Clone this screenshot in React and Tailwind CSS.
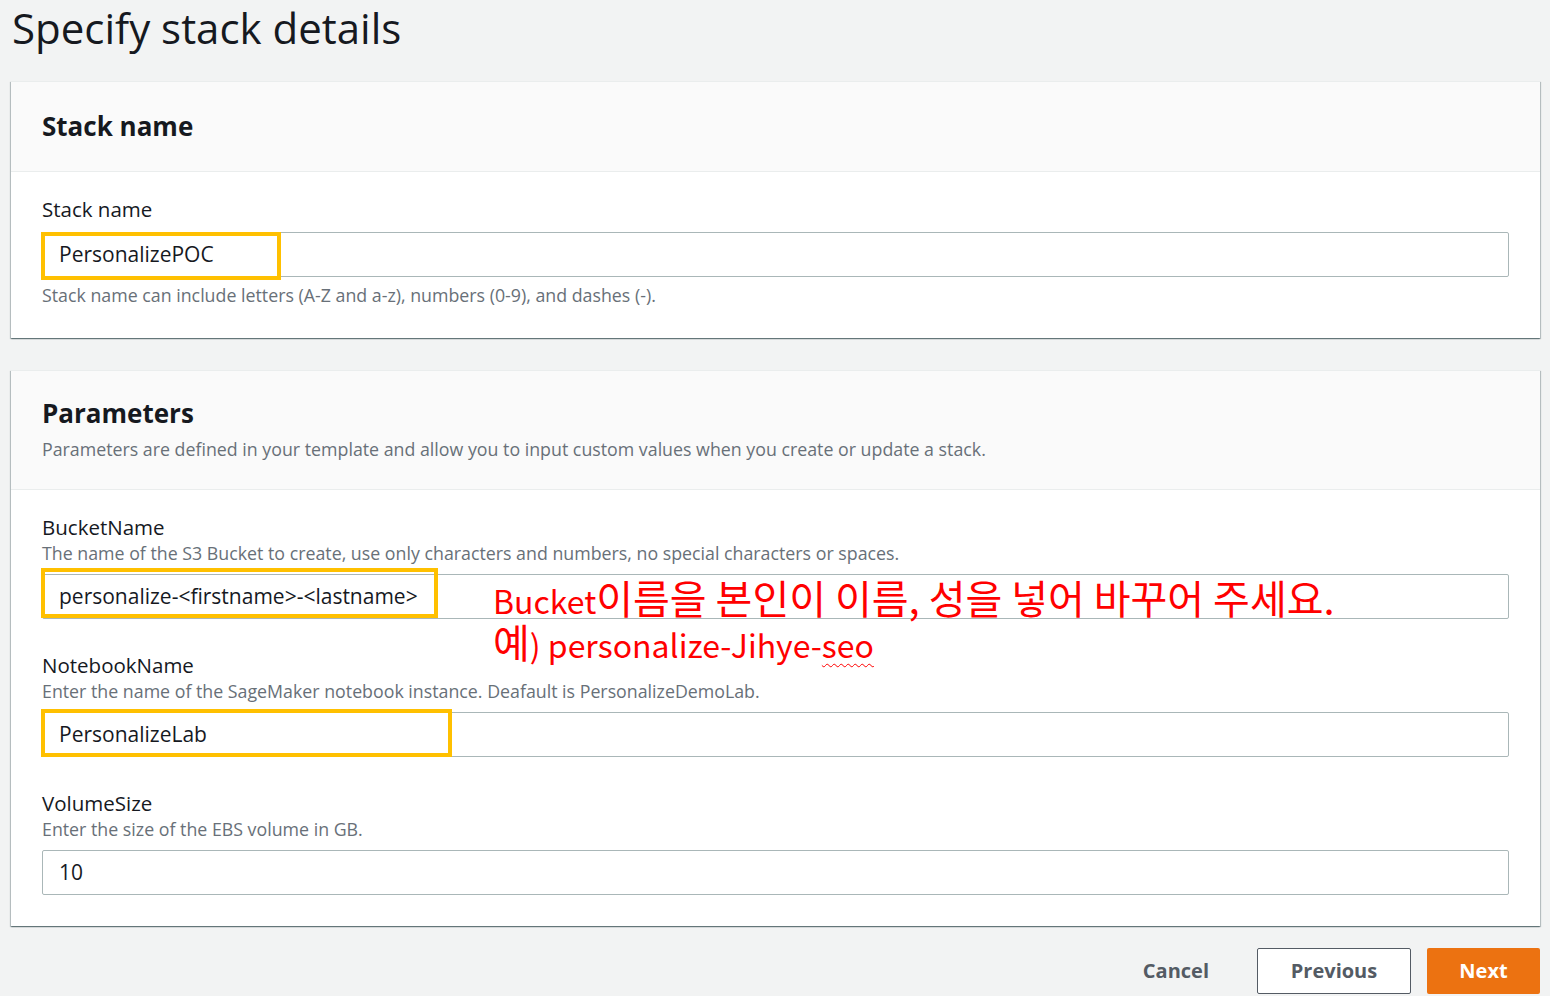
const font = { fontFamily: '"Open Sans", "Noto Sans", sans-serif' }
const kr = { fontFamily: '"Noto Sans CJK KR", "Noto Sans", sans-serif' }

function Field({ label, desc, value, hl }) {
  return (
    <div className="flex flex-col">
      <p className="text-[20.5px] leading-[28px] text-[#16191f]">{label}</p>
      {desc && <p className="text-[17.8px] leading-[24px] text-[#687078]">{desc}</p>}
      <div className="relative mt-[9px] h-[45px] border border-[#aab7b8] rounded-[2px] bg-white flex items-center pl-[16px] text-[21px] text-[#16191f]">
        {value}
        {hl && <div className={`absolute -left-[2px] border-[4px] border-[#ffc000] ${hl}`} />}
      </div>
    </div>
  )
}

function Card({ title, desc, children }) {
  return (
    <section className="bg-white border-t border-[#eaeded] shadow-[0_1px_1px_0_rgba(0,28,36,0.35),1px_1px_1px_0_rgba(0,28,36,0.2),-1px_1px_1px_0_rgba(0,28,36,0.2)]">
      <header className={`bg-[#fafafa] border-b border-[#eaeded] px-[31px] ${desc ? 'pt-[26px] pb-[28px]' : 'pt-[28px] pb-[29px]'}`}>
        <h2 className="text-[26px] leading-[32px] font-bold text-[#16191f]">{title}</h2>
        {desc && <p className="mt-[8px] text-[17.8px] leading-[24px] text-[#687078]">{desc}</p>}
      </header>
      {children}
    </section>
  )
}

export default function App() {
  return (
    <div style={font} className="w-[1550px] h-[996px] bg-[#f2f3f3] overflow-hidden">
      <h1 className="pl-[12px] text-[42px] leading-[56px] text-[#16191f]">Specify stack details</h1>
      <div className="pl-[11px] pr-[10px] mt-[25px] flex flex-col">
        <Card title="Stack name">
          <div className="px-[31px] pt-[23px] pb-[31px]">
            <Field label="Stack name" value="PersonalizePOC" hl="w-[240px] -top-[1px] h-[48px]" />
            <p className="mt-[6px] text-[17.8px] leading-[24px] text-[#687078]">Stack name can include letters (A-Z and a-z), numbers (0-9), and dashes (-).</p>
          </div>
        </Card>
        <div className="h-[32px]" />
        <Card title="Parameters" desc="Parameters are defined in your template and allow you to input custom values when you create or update a stack.">
          <div className="relative px-[31px] pt-[23px] pb-[31px] flex flex-col gap-[32px]">
            <Field label="BucketName" desc="The name of the S3 Bucket to create, use only characters and numbers, no special characters or spaces." value="personalize-<firstname>-<lastname>" hl="w-[397px] -top-[7px] h-[50px]" />
            <Field label="NotebookName" desc="Enter the name of the SageMaker notebook instance. Deafault is PersonalizeDemoLab." value="PersonalizeLab" hl="w-[411px] -top-[4px] h-[48px]" />
            <Field label="VolumeSize" desc="Enter the size of the EBS volume in GB." value="10" />
            <div style={kr} className="absolute left-[482px] top-[87px] text-[32px] leading-[45px] text-[#ff0000]">
              <p>Bucket<span className="text-[40px] leading-[40px]">이름을 본인이 이름, 성을 넣어 바꾸어 주세요.</span></p>
              <p className="-mt-[2px]"><span className="text-[40px] leading-[40px]">예</span>) personalize-Jihye-<span className="underline decoration-wavy decoration-[1px] underline-offset-[5px]">seo</span></p>
            </div>
          </div>
        </Card>
        <div className="flex justify-end items-center mt-[22px] gap-[16px]">
          <button className="px-[32px] h-[45px] text-[20px] font-bold text-[#545b64]">Cancel</button>
          <button className="w-[154px] h-[46px] border border-[#545b64] rounded-[2px] bg-white text-[20px] font-bold text-[#545b64]">Previous</button>
          <button className="w-[113px] h-[46px] rounded-[2px] bg-[#ec7211] text-[20px] font-bold text-white">Next</button>
        </div>
      </div>
    </div>
  )
}
